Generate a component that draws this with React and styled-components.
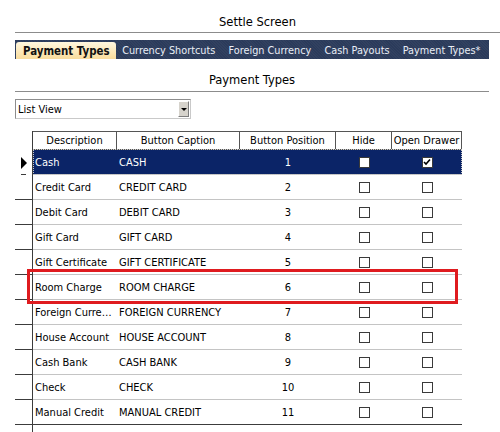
import React from 'react';
import styled, { createGlobalStyle } from 'styled-components';

const GlobalStyle = createGlobalStyle`
  html, body {
    margin: 0;
    padding: 0;
    background: #fff;
  }
  body {
    font-family: "DejaVu Sans Condensed", "DejaVu Sans", sans-serif;
    font-stretch: condensed;
    color: #000;
  }
`;

const COLS = '18px 84px 123px 96px 56px 70px';

const Page = styled.div`
  width: 500px;
  height: 432px;
  overflow: hidden;
  padding-left: 15px;
  box-sizing: border-box;
`;

const ScreenTitle = styled.div`
  height: 22px;
  padding-top: 10px;
  border-bottom: 1px solid #8c8c8c;
  display: flex;
  align-items: center;
  justify-content: center;
  font-size: 12.8px;
`;

const TabBar = styled.div`
  margin-top: 7px;
  width: 474px;
  height: 19px;
  box-sizing: border-box;
  padding: 2px 0 0 1px;
  display: flex;
  align-items: stretch;
  overflow: hidden;
  background-color: #2b3b5b;
  background-image: repeating-linear-gradient(45deg, rgba(255,255,255,0.03) 0 1px, transparent 1px 2px);
`;

const Tab = styled.div`
  display: flex;
  align-items: center;
  padding: ${p => (p.$active ? '0 6px 0 7px' : '0 6.6px')};
  font-size: ${p => (p.$active ? '11.4px' : '10.8px')};
  white-space: nowrap;
  color: ${p => (p.$active ? '#111' : '#e9eef6')};
  font-weight: ${p => (p.$active ? 'bold' : 'normal')};
  background: ${p => (p.$active ? 'linear-gradient(#fff7df, #f9dc9c)' : 'transparent')};
  border-radius: ${p => (p.$active ? '3px 3px 0 0' : '0')};
`;

const SectionTitle = styled.div`
  width: 474px;
  height: 24px;
  padding-top: 8px;
  border-bottom: 1px solid #8c8c8c;
  display: flex;
  align-items: center;
  justify-content: center;
  font-size: 12.8px;
`;

const Select = styled.div`
  margin-top: 7px;
  width: 176px;
  height: 20px;
  box-sizing: border-box;
  border: 1px solid #8d8d8d;
  border-right-color: #c9c9c9;
  border-bottom-color: #c9c9c9;
  display: flex;
  align-items: center;
  justify-content: space-between;
  padding: 0 1px 0 2px;
  font-size: 11px;
`;

const SelectArrow = styled.div`
  width: 11px;
  height: 16px;
  box-sizing: border-box;
  background: #d6d3cc;
  border: 1px solid;
  border-color: #fff #7d7d7d #7d7d7d #fff;
  display: flex;
  align-items: center;
  justify-content: center;

  &::before {
    content: "";
    border-top: 3px solid #000;
    border-left: 3px solid transparent;
    border-right: 3px solid transparent;
  }
`;

const Grid = styled.div`
  position: relative;
  margin-top: 12px;
  width: 447px;
`;

const HeaderRow = styled.div`
  display: grid;
  grid-template-columns: ${COLS};
  height: 19px;
`;

const Row = styled.div`
  position: relative;
  display: grid;
  grid-template-columns: ${COLS};
  height: 25px;

  ${p => p.$selected && `
    &::after {
      content: "";
      position: absolute;
      left: 18px;
      right: 0;
      top: -1px;
      bottom: 0;
      border: 1px dotted #c8c8c8;
      pointer-events: none;
    }
  `}
`;

const RowHeader = styled.div`
  box-sizing: border-box;
  border-right: 1px solid #3c3c3c;
  border-bottom: ${p => (p.$plain ? 'none' : '1px solid #3c3c3c')};
  display: flex;
  align-items: center;
  justify-content: center;
  background: ${p =>
    p.$dash ? 'linear-gradient(#3c3c3c, #3c3c3c) no-repeat 6px 100% / 5px 1px' : 'transparent'};
`;

const Pointer = styled.span`
  width: 0;
  height: 0;
  border-left: 6px solid #000;
  border-top: 6px solid transparent;
  border-bottom: 6px solid transparent;
  margin-left: 1px;
`;

const HeadCell = styled.div`
  box-sizing: border-box;
  border-top: 1px solid #555;
  border-right: 1px solid #555;
  border-bottom: 1px solid #555;
  display: flex;
  align-items: center;
  justify-content: center;
  font-size: 11px;
  white-space: nowrap;
  overflow: hidden;
`;

const Cell = styled.div`
  box-sizing: border-box;
  border-bottom: 1px solid ${p => (p.$last ? '#3c3c3c' : '#c4c4c4')};
  display: flex;
  align-items: center;
  justify-content: ${p => (p.$center ? 'center' : 'flex-start')};
  padding-left: ${p => (p.$center ? '0' : '2px')};
  font-size: 11px;
  white-space: nowrap;
  overflow: hidden;
  color: ${p => (p.$selected ? '#fff' : '#000')};
  background: ${p => (p.$selected ? '#0b2467' : 'transparent')};
`;

const Box = styled.span`
  width: 11px;
  height: 11px;
  box-sizing: border-box;
  border: 1px solid #3a3a3a;
  background: ${p => (p.$filled ? '#fff' : 'transparent')};
  display: flex;
  align-items: center;
  justify-content: center;
`;

const Filler = styled.div`
  display: grid;
  grid-template-columns: ${COLS};
  height: 10px;
`;

const Highlight = styled.div`
  position: absolute;
  left: 12px;
  top: 138px;
  width: 431px;
  height: 35px;
  box-sizing: border-box;
  border: 3px solid #df1b1f;
  pointer-events: none;
`;

const tabs = ['Payment Types', 'Currency Shortcuts', 'Foreign Currency', 'Cash Payouts', 'Payment Types*'];

const rows = [
  ['Cash', 'CASH', 1, false, true],
  ['Credit Card', 'CREDIT CARD', 2, false, false],
  ['Debit Card', 'DEBIT CARD', 3, false, false],
  ['Gift Card', 'GIFT CARD', 4, false, false],
  ['Gift Certificate', 'GIFT CERTIFICATE', 5, false, false],
  ['Room Charge', 'ROOM CHARGE', 6, false, false],
  ['Foreign Curre…', 'FOREIGN CURRENCY', 7, false, false],
  ['House Account', 'HOUSE ACCOUNT', 8, false, false],
  ['Cash Bank', 'CASH BANK', 9, false, false],
  ['Check', 'CHECK', 10, false, false],
  ['Manual Credit', 'MANUAL CREDIT', 11, false, false],
];

function Check({ checked, filled }) {
  return (
    <Box $filled={filled}>
      {checked && (
        <svg width="8" height="8" viewBox="0 0 8 8">
          <path d="M1 4 L3 6 L7 1.5" fill="none" stroke="#000" strokeWidth="1.6" />
        </svg>
      )}
    </Box>
  );
}

export default function App() {
  return (
    <Page>
      <GlobalStyle />
      <ScreenTitle>Settle Screen</ScreenTitle>
      <TabBar>
        {tabs.map((t, i) => (
          <Tab key={i} $active={i === 0}>{t}</Tab>
        ))}
      </TabBar>
      <SectionTitle>Payment Types</SectionTitle>
      <Select>
        <span>List View</span>
        <SelectArrow />
      </Select>
      <Grid>
        <HeaderRow>
          <RowHeader $plain />
          <HeadCell>Description</HeadCell>
          <HeadCell>Button Caption</HeadCell>
          <HeadCell>Button Position</HeadCell>
          <HeadCell>Hide</HeadCell>
          <HeadCell>Open Drawer</HeadCell>
        </HeaderRow>
        {rows.map(([desc, caption, pos, hide, drawer], i) => {
          const sel = i === 0;
          const last = i === rows.length - 1;
          return (
            <Row key={i} $selected={sel}>
              <RowHeader $plain={sel} $dash={sel}>{sel && <Pointer />}</RowHeader>
              <Cell $selected={sel} $last={last}>{desc}</Cell>
              <Cell $selected={sel} $last={last}>{caption}</Cell>
              <Cell $selected={sel} $last={last} $center>{pos}</Cell>
              <Cell $selected={sel} $last={last} $center><Check checked={hide} filled={sel} /></Cell>
              <Cell $selected={sel} $last={last} $center><Check checked={drawer} filled={sel} /></Cell>
            </Row>
          );
        })}
        <Filler>
          <RowHeader $plain />
        </Filler>
        <Highlight />
      </Grid>
    </Page>
  );
}
